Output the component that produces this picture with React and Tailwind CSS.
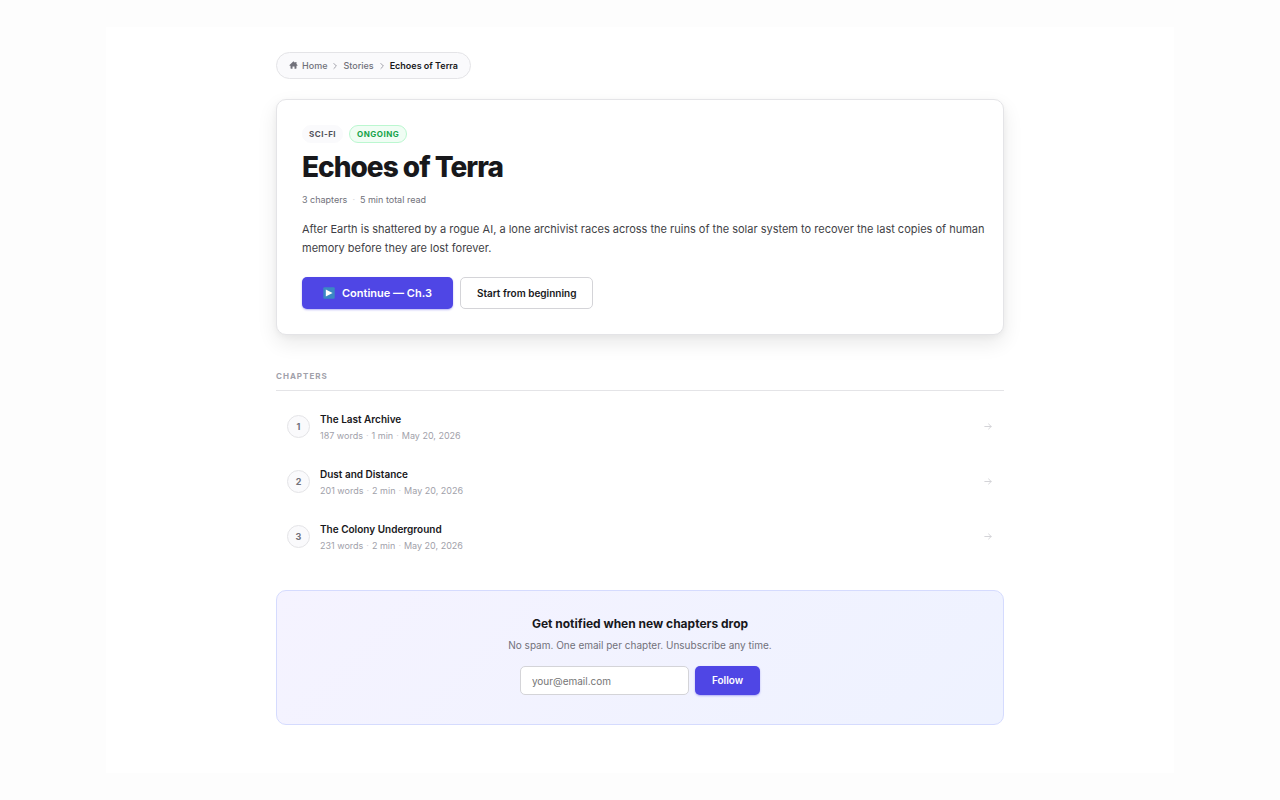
import React from "react";
import { clsx } from "clsx";

const chapters = [
  { id: 1, title: "The Last Archive", words: 187, minutes: 1, date: "May 20, 2026" },
  { id: 2, title: "Dust and Distance", words: 201, minutes: 2, date: "May 20, 2026" },
  { id: 3, title: "The Colony Underground", words: 231, minutes: 2, date: "May 20, 2026" },
];

function HomeIcon() {
  return (
    <svg viewBox="0 0 20 20" className="size-[9px]" fill="currentColor" aria-hidden="true">
      <path d="M10.7 1.3a1 1 0 0 0-1.4 0l-8 7.6A1 1 0 0 0 2 10.6h1.4V16a1 1 0 0 0 1 1h3.4v-4.6h4.4V17h3.4a1 1 0 0 0 1-1v-5.4H18a1 1 0 0 0 .7-1.7l-2.1-2V2.4h-2.8v1.9z" />
    </svg>
  );
}

function Chevron() {
  return (
    <svg viewBox="0 0 8 8" className="size-2 text-[#a1a1aa]" fill="none" stroke="currentColor" aria-hidden="true">
      <path d="M2.9 1.5 5.4 4 2.9 6.5" strokeLinecap="round" strokeLinejoin="round" />
    </svg>
  );
}

function PlayIcon() {
  return (
    <svg viewBox="0 0 12 12" className="size-3" aria-hidden="true">
      <rect x="0.3" y="0.3" width="11.4" height="11.4" rx="1" fill="#3b88c3" />
      <path d="M2.8 2.6v6.8L9.6 6z" fill="#fff" />
    </svg>
  );
}

function ArrowIcon() {
  return (
    <svg viewBox="0 0 8 8" className="size-2 text-[#d4d4d8]" fill="none" stroke="currentColor" aria-hidden="true">
      <path d="M.8 3.5h6.4M4.6 1 7.2 3.5 4.6 6" strokeLinecap="round" strokeLinejoin="round" />
    </svg>
  );
}

function Dot({ className }) {
  return <span className={clsx("text-[#d4d4d8]", className)}>·</span>;
}

function Breadcrumb() {
  return (
    <nav
      aria-label="Breadcrumb"
      className="flex w-fit items-center gap-1 rounded-full border border-[#e4e4e7] bg-[#fafafc] px-3 py-[6px] text-[9px] leading-[13px] font-medium text-[#71717a]"
    >
      <a href="#home" className="flex items-center gap-1">
        <HomeIcon />
        Home
      </a>
      <Chevron />
      <a href="#stories">Stories</a>
      <Chevron />
      <span className="font-semibold text-[#18181b]">Echoes of Terra</span>
    </nav>
  );
}

function StoryCard() {
  return (
    <section className="mt-5 rounded-[10px] border border-[#e4e4e7] bg-white py-[25px] pr-4 pl-[25px] shadow-[0_8px_20px_rgba(0,0,0,0.09),0_2px_6px_rgba(0,0,0,0.04)]">
      <div className="flex gap-[6px] text-[8px] leading-[16px] font-bold tracking-[0.5px]">
        <span className="rounded-full border border-[#fafafc] bg-[#fafafc] px-[6px] text-[#52525b]">SCI-FI</span>
        <span className="rounded-full border border-[#bbf7d0] bg-[#f0fdf4] px-[7px] text-[#16a34a]">ONGOING</span>
      </div>
      <h1 className="mt-[8px] text-[28px] leading-[32px] font-extrabold tracking-[-1px] text-[#18181b]">
        Echoes of Terra
      </h1>
      <p className="mt-[10px] flex gap-[5px] text-[9px] leading-[14px] text-[#71717a]">
        <span>3 chapters</span>
        <Dot />
        <span>5 min total read</span>
      </p>
      <p className="mt-[13px] text-[11px] leading-[19px] text-[#3f3f46]">
        After Earth is shattered by a rogue AI, a lone archivist races across the ruins of the solar system to recover the
        last copies of human memory before they are lost forever.
      </p>
      <div className="mt-[19px] flex gap-[7px]">
        <button
          type="button"
          className="flex h-8 items-center gap-[7px] rounded-[5px] bg-[#4f46e5] px-[21px] text-[11px] font-semibold text-white shadow-[0_1px_2px_rgba(79,70,229,0.4)]"
        >
          <PlayIcon />
          Continue — Ch.3
        </button>
        <button
          type="button"
          className="h-8 rounded-[5px] border border-[#d4d4d8] bg-white px-4 text-[10px] font-semibold text-[#18181b]"
        >
          Start from beginning
        </button>
      </div>
    </section>
  );
}

function ChapterList() {
  return (
    <section className="mt-[34px]">
      <h2 className="border-b border-[#e4e4e7] pb-[7px] text-[8px] leading-[14px] font-bold tracking-[1px] text-[#a1a1aa]">
        CHAPTERS
      </h2>
      <ul className="mt-2">
        {chapters.map((c) => (
          <li key={c.id}>
            <a href={`#chapter-${c.id}`} className="flex h-[55px] items-center gap-[10px] pr-3 pl-[11px]">
              <span className="flex size-[23px] items-center justify-center rounded-full border border-[#e4e4e7] bg-[#fafafc] text-[9px] font-bold text-[#71717a]">
                {c.id}
              </span>
              <div className="flex-1">
                <h3 className="text-[10px] leading-[16px] font-semibold text-[#18181b]">{c.title}</h3>
                <p className="mt-[2px] flex gap-[3px] text-[9px] leading-[14px] text-[#a1a1aa]">
                  <span>{c.words} words</span>
                  <Dot />
                  <span>{c.minutes} min</span>
                  <Dot />
                  <span>{c.date}</span>
                </p>
              </div>
              <ArrowIcon />
            </a>
          </li>
        ))}
      </ul>
    </section>
  );
}

function Newsletter() {
  return (
    <section className="mt-[26px] flex flex-col items-center rounded-[10px] border border-[#d5dbfe] bg-linear-135 from-[#f5f3ff] to-[#eef2ff] px-6 pt-[24px] pb-[29px]">
      <h2 className="text-[12px] leading-[18px] font-bold text-[#18181b]">Get notified when new chapters drop</h2>
      <p className="mt-[5px] text-[10px] leading-[14px] text-[#71717a]">
        No spam. One email per chapter. Unsubscribe any time.
      </p>
      <form className="mt-[14px] flex gap-[6px]" onSubmit={(e) => e.preventDefault()}>
        <input
          type="email"
          aria-label="Email address"
          placeholder="your@email.com"
          className="h-[29px] w-[169px] rounded-[5px] border border-[#d4d4d8] bg-white px-[11px] text-[10px] text-[#18181b] placeholder:text-[#757575]"
        />
        <button
          type="submit"
          className="h-[29px] rounded-[5px] bg-[#4f46e5] px-[17px] text-[10px] font-semibold text-white shadow-[0_1px_2px_rgba(79,70,229,0.4)]"
        >
          Follow
        </button>
      </form>
    </section>
  );
}

export default function App() {
  return (
    <div className="min-h-screen bg-[#fdfdfd] px-[106px] py-[27px] font-['Inter',sans-serif]">
      <main className="bg-white px-6 pt-[25px] pb-[48px]">
        <div className="mx-auto max-w-[728px]">
          <Breadcrumb />
          <StoryCard />
          <ChapterList />
          <Newsletter />
        </div>
      </main>
    </div>
  );
}
